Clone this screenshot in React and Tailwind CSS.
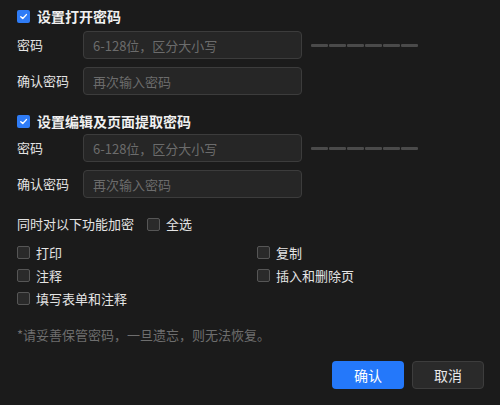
import React from "react";

const font = { fontFamily: '"Noto Sans CJK SC", "Noto Sans", sans-serif' };

function CheckedBox() {
  return (
    <span className="flex h-[13px] w-[13px] shrink-0 items-center justify-center rounded-[2px] bg-[#2f7cf6]">
      <svg width="9" height="9" viewBox="0 0 10 10" fill="none">
        <path d="M2 5.2 L4.2 7.3 L8.2 2.9" stroke="white" strokeWidth="1.6" strokeLinecap="round" strokeLinejoin="round" />
      </svg>
    </span>
  );
}

function EmptyBox() {
  return <span className="block h-[13px] w-[13px] shrink-0 rounded-[2px] border border-[#565656] bg-[#2a2a2a]" />;
}

function Field({ label, placeholder, meter }) {
  return (
    <div className="flex h-[28px] items-center">
      <div className="w-[66px] text-[13px] text-[#e4e4e4]">{label}</div>
      <input
        className="h-[28px] w-[219px] rounded-[4px] border border-[#3c3c3c] bg-[#262626] px-[9px] text-[13px] text-[#e4e4e4] outline-none placeholder:text-[#6c6c6c]"
        placeholder={placeholder}
        style={font}
      />
      {meter && (
        <div className="ml-[9px] flex gap-[1px]">
          {[0, 1, 2, 3, 4, 5].map((i) => (
            <span key={i} className="block h-[3px] w-[17px] rounded-[1px] bg-[#4a4a4a]" />
          ))}
        </div>
      )}
    </div>
  );
}

function Option({ label }) {
  return (
    <div className="flex h-[23px] items-center gap-[6px]">
      <EmptyBox />
      <span className="text-[13px] text-[#e4e4e4]">{label}</span>
    </div>
  );
}

export default function App() {
  return (
    <div className="h-[405px] w-[500px] bg-[#1b1b1b] pl-[17px] pr-[16px] pt-[7px]" style={font}>
      <div className="flex h-[18px] items-center gap-[7px]">
        <CheckedBox />
        <span className="text-[14px] font-bold text-[#f0f0f0]">设置打开密码</span>
      </div>
      <div className="mt-[6px]">
        <Field label="密码" placeholder="6-128位，区分大小写" meter />
      </div>
      <div className="mt-[8px]">
        <Field label="确认密码" placeholder="再次输入密码" />
      </div>

      <div className="mt-[17px] flex h-[18px] items-center gap-[7px]">
        <CheckedBox />
        <span className="text-[14px] font-bold text-[#f0f0f0]">设置编辑及页面提取密码</span>
      </div>
      <div className="mt-[4px]">
        <Field label="密码" placeholder="6-128位，区分大小写" meter />
      </div>
      <div className="mt-[8px]">
        <Field label="确认密码" placeholder="再次输入密码" />
      </div>

      <div className="mt-[17px] flex h-[18px] items-center">
        <span className="text-[13px] text-[#e4e4e4]">同时对以下功能加密</span>
        <span className="ml-[13px] flex items-center gap-[6px]">
          <EmptyBox />
          <span className="text-[13px] text-[#e4e4e4]">全选</span>
        </span>
      </div>

      <div className="mt-[8px] grid grid-cols-[240px_1fr]">
        <Option label="打印" />
        <Option label="复制" />
        <Option label="注释" />
        <Option label="插入和删除页" />
        <Option label="填写表单和注释" />
      </div>

      <div className="mt-[16px] text-[13px] leading-[18px] text-[#6e6e6e]">*请妥善保管密码，一旦遗忘，则无法恢复。</div>

      <div className="mt-[17px] flex justify-end gap-[8px]">
        <button className="h-[28px] w-[72px] rounded-[4px] bg-[#2478fa] text-[14px] text-white" style={font}>
          确认
        </button>
        <button className="h-[28px] w-[72px] rounded-[4px] border border-[#3d3d3d] bg-[#2a2a2a] text-[14px] text-[#e8e8e8]" style={font}>
          取消
        </button>
      </div>
    </div>
  );
}
